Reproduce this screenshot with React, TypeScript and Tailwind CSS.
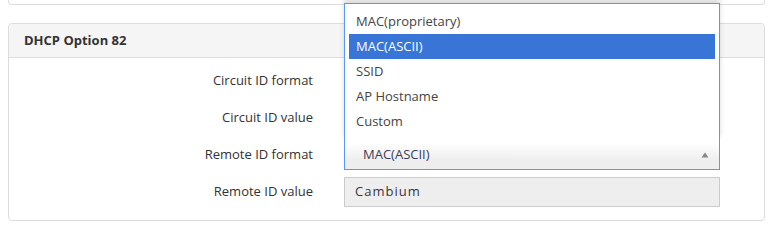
import React from 'react';

const options = ['MAC(proprietary)', 'MAC(ASCII)', 'SSID', 'AP Hostname', 'Custom'];

function Row({ label, children }: { label: string; children?: React.ReactNode }) {
  return (
    <div className="flex items-center h-[30px]">
      <div className="w-[304px] text-right text-[13px] text-[#333]">{label}</div>
      <div className="ml-[31px] w-[376px] h-full relative">{children}</div>
    </div>
  );
}

export default function App() {
  return (
    <main className="w-[773px] h-[240px] bg-white overflow-hidden font-['Open_Sans',sans-serif]">
      {/* Previous panel, only its bottom edge shows */}
      <div className="mx-2 h-[5px] rounded-b border border-t-0 border-[#ddd]" />

      <section className="mx-2 mt-[18px] rounded border border-[#ddd]">
        <div className="h-[34px] bg-[#f5f5f5] border-b border-[#ddd] rounded-t px-[15px] flex items-center">
          <h3 className="text-[13px] font-bold text-[#333]">DHCP Option 82</h3>
        </div>

        <div className="pt-[8px] pb-[13px] flex flex-col gap-[7px]">
          <Row label="Circuit ID format" />
          <Row label="Circuit ID value" />
          <Row label="Remote ID format">
            {/* Open select, list drops up */}
            <div className="absolute left-0 right-0 bottom-full mb-[-1px] h-[138px] bg-white border border-b-0 border-[#5897fb] px-[4px] pt-[5px] shadow-[0_-4px_5px_rgba(0,0,0,0.15)] z-10">
              <ul>
                {options.map((o) => (
                  <li
                    key={o}
                    className={
                      'h-[25px] px-[7px] flex items-center text-[13px] ' +
                      (o === 'MAC(ASCII)' ? 'bg-[#3875d7] text-white' : 'text-[#444]')
                    }
                  >
                    {o}
                  </li>
                ))}
              </ul>
            </div>
            <div className="relative z-20 h-[30px] border border-t-0 border-[#5897fb] bg-gradient-to-b from-white from-10% to-[#eee] to-70% flex items-center pl-[18px] pr-[8px]">
              <span className="text-[13px] text-[#3c3c5a] flex-1">MAC(ASCII)</span>
              <svg width="8" height="6" viewBox="0 0 8 6" className="mr-[2px]">
                <path d="M4 0.5 L7.5 5.5 L0.5 5.5 Z" fill="#888" />
              </svg>
            </div>
          </Row>
          <Row label="Remote ID value">
            <div className="h-[30px] border border-[#ccc] bg-[#eee] flex items-center px-[10px] text-[13px] tracking-[1px] text-[#3b3440]">
              Cambium
            </div>
          </Row>
        </div>
      </section>
    </main>
  );
}
